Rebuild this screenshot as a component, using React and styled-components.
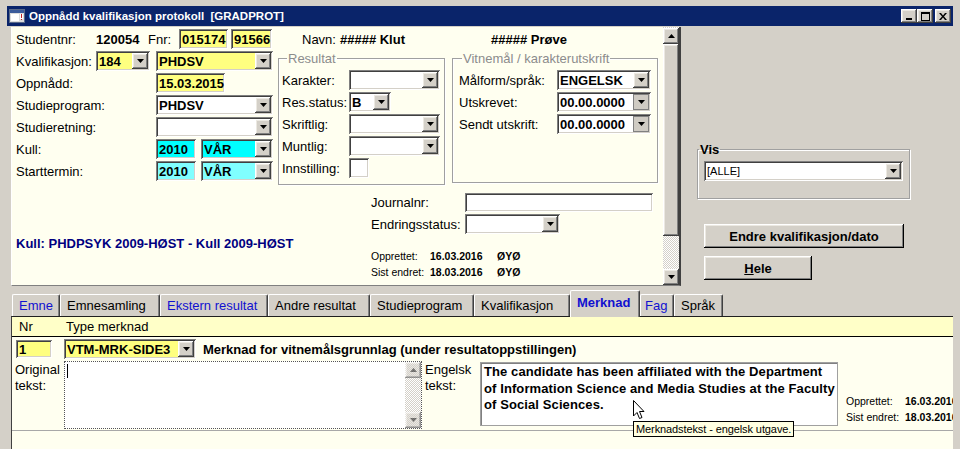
import React from "react";
import styled, { createGlobalStyle } from "styled-components";

const GRAY = "#d4d0c8";
const CREAM = "#fffff0";
const YELLOW = "#ffff80";
const CYAN = "#00ffff";
const LIGHTCYAN = "#80ffff";

const raised = `box-shadow: inset -1px -1px #404040, inset 1px 1px #ffffff, inset -2px -2px #808080, inset 2px 2px #ece9e2;`;
const sunken = `box-shadow: inset 1px 1px #808080, inset -1px -1px #ffffff, inset 2px 2px #404040, inset -2px -2px ${GRAY};`;

const GlobalStyle = createGlobalStyle`
  html, body { margin: 0; padding: 0; }
  body {
    background: ${GRAY};
    font-family: "Liberation Sans", Arial, sans-serif;
    font-size: 13px;
    color: #000;
  }
  * { box-sizing: border-box; }
`;

const Window = styled.div`
  position: relative;
  width: 960px;
  height: 449px;
  overflow: hidden;
  padding-top: 6px;
  background: ${GRAY};
`;

//Title bar
const TitleBar = styled.div`
  display: flex;
  align-items: center;
  height: 20px;
  margin: 0 7px;
  padding: 0 2px;
  background: #0a246a;
  color: #fff;
  font-family: "Liberation Sans", Arial, sans-serif;
  font-weight: bold;
  font-size: 11.5px;
`;

const TitleText = styled.span`
  margin-left: 4px;
  white-space: pre;
  flex: 1;
`;

const WinButtons = styled.div`
  display: flex;
`;

const WinBtn = styled.div`
  width: 16px;
  height: 14px;
  background: ${GRAY};
  ${raised}
  display: flex;
  align-items: center;
  justify-content: center;
  margin-left: ${(p) => (p.$gap ? 2 : 0)}px;
`;

//Main area
const Main = styled.div`
  display: flex;
  margin-top: 1px;
  padding-left: 11px;
`;

const TopPanel = styled.div`
  display: flex;
  flex-shrink: 0;
  width: 670px;
  height: 259px;
  background: ${CREAM};
  border-left: 1px solid #fff;
  border-right: 2px solid #404040;
  border-bottom: 1px solid #808080;
`;

const FormArea = styled.div`
  flex: 1;
  padding: 1px 0 0 4px;
  display: flex;
  flex-direction: column;
`;

const Row = styled.div`
  display: flex;
  align-items: ${(p) => p.$align || "center"};
  height: ${(p) => p.$h || 22}px;
  white-space: nowrap;
`;

const Label = styled.span`
  display: inline-block;
  width: ${(p) => (p.$w ? p.$w + "px" : "auto")};
  margin-left: ${(p) => p.$ml || 0}px;
  color: ${(p) => p.$color || "#000"};
  font-size: ${(p) => p.$size || 13}px;
  font-weight: ${(p) => (p.$bold ? "bold" : "normal")};
  flex-shrink: 0;
`;

const Field = styled.div`
  display: flex;
  align-items: center;
  flex-shrink: 0;
  width: ${(p) => p.$w}px;
  height: ${(p) => p.$h || 20}px;
  margin-left: ${(p) => p.$ml || 0}px;
  padding: 0 2px 0 3px;
  background: ${(p) => p.$bg || "#fff"};
  ${sunken}
  font-weight: bold;
  font-size: ${(p) => p.$size || 13}px;
  overflow: hidden;
`;

const FieldText = styled.span`
  flex: 1;
  overflow: hidden;
  font-weight: ${(p) => (p.$normal ? "normal" : "bold")};
`;

const DropBtn = styled.div`
  width: 16px;
  height: 16px;
  background: ${GRAY};
  display: flex;
  align-items: center;
  justify-content: center;
  ${(p) =>
    p.$flat
      ? `box-shadow: inset 1px 1px #808080, inset -1px -1px #808080; background: #cfcbc3;`
      : raised}
`;

const Arrow = ({ up }) => (
  <svg width="7" height="4" viewBox="0 0 7 4">
    <polygon points={up ? "0,4 7,4 3.5,0" : "0,0 7,0 3.5,4"} fill="#000" />
  </svg>
);

const Combo = ({ w, bg, ml, flat, normal, size, children }) => (
  <Field $w={w} $bg={bg} $ml={ml} $size={size}>
    <FieldText $normal={normal}>{children}</FieldText>
    <DropBtn $flat={flat}>
      <Arrow />
    </DropBtn>
  </Field>
);

const Columns = styled.div`
  display: flex;
  align-items: flex-start;
`;

const LeftCol = styled.div`
  display: flex;
  flex-direction: column;
  width: 257px;
`;

const Group = styled.fieldset`
  margin: 1px 0 0 ${(p) => p.$ml || 0}px;
  padding: 3px 0 0 ${(p) => p.$pl || 3}px;
  width: ${(p) => p.$w}px;
  height: ${(p) => p.$h}px;
  border: 1px solid #a0a0a0;
  box-shadow: 1px 1px 0 #fff, inset 1px 1px 0 #fff;
  min-width: 0;
  flex-shrink: 0;
`;

const Legend = styled.legend`
  padding: 0 1px;
  margin-left: ${(p) => p.$ml || 0}px;
  color: ${(p) => p.$color || "#8c8c8c"};
  font-weight: ${(p) => (p.$bold ? "bold" : "normal")};
  font-size: 13px;
  line-height: 15px;
`;

const Lower = styled.div`
  display: flex;
  margin-top: 6px;
`;

const KullText = styled.div`
  width: 355px;
  padding-top: 45px;
  color: #000080;
  font-weight: bold;
  white-space: nowrap;
`;

const InfoCol = styled.div`
  display: flex;
  flex-direction: column;
`;

const Small = styled.div`
  display: flex;
  flex-direction: column;
  flex-shrink: 0;
  margin-top: ${(p) => p.$mt || 0}px;
  margin-left: ${(p) => p.$ml || 0}px;
  font-size: 10.5px;
  line-height: 16px;
  white-space: nowrap;
`;

const SmallRow = styled.div`
  display: flex;
`;

const SmallLabel = styled.span`
  width: ${(p) => (p.$w ? p.$w + "px" : "auto")};
  flex-shrink: 0;
  font-weight: ${(p) => (p.$bold ? "bold" : "normal")};
`;

//Scrollbar
const ScrollBar = styled.div`
  width: 16px;
  flex-shrink: 0;
  display: flex;
  flex-direction: column;
  background-image: repeating-conic-gradient(#ffffff 0 25%, ${GRAY} 0 50%);
  background-size: 2px 2px;
  padding-top: 1px;
`;

const ScrollBtn = styled.div`
  width: 16px;
  height: 16px;
  background: ${GRAY};
  ${raised}
  display: flex;
  align-items: center;
  justify-content: center;
  opacity: ${(p) => (p.$disabled ? 0.5 : 1)};
`;

const Thumb = styled.div`
  width: 16px;
  height: ${(p) => p.$h}px;
  background: ${GRAY};
  ${raised}
`;

const Track = styled.div`
  flex: 1;
`;

//Right pane
const RightPane = styled.div`
  flex: 1;
  padding: 114px 0 0 16px;
  display: flex;
  flex-direction: column;
`;

const Button = styled.div`
  width: ${(p) => p.$w}px;
  height: 24px;
  margin: ${(p) => p.$mt}px 0 0 7px;
  background: ${GRAY};
  box-shadow: inset -1px -1px #000, inset 1px 1px #fff, inset -2px -2px #808080,
    inset 2px 2px #ece9e2;
  display: flex;
  align-items: center;
  justify-content: center;
  font-weight: bold;
  font-size: 13px;
  u {
    text-decoration: underline;
  }
`;

//Tabs
const TabRow = styled.div`
  display: flex;
  align-items: flex-end;
  height: 27px;
  margin-top: 3px;
  padding-left: 12px;
`;

const Tab = styled.div`
  width: ${(p) => p.$w}px;
  height: ${(p) => (p.$active ? 27 : 22)}px;
  margin-bottom: ${(p) => (p.$active ? -1 : 0)}px;
  padding-left: ${(p) => p.$pl || 6}px;
  display: flex;
  align-items: center;
  background: ${GRAY};
  border-top: 1px solid #fff;
  border-left: 1px solid #fff;
  border-right: 1px solid #404040;
  box-shadow: inset -1px 0 #808080;
  border-radius: 2px 2px 0 0;
  color: ${(p) => (p.$blue ? "#1010d0" : "#000")};
  font-weight: ${(p) => (p.$active ? "bold" : "normal")};
  padding-bottom: ${(p) => (p.$active ? 4 : 0)}px;
  white-space: nowrap;
  position: relative;
  z-index: ${(p) => (p.$active ? 2 : 1)};
`;

//Bottom panel
const BottomPanel = styled.div`
  position: relative;
  margin-left: 11px;
  width: 942px;
  height: 140px;
  overflow: hidden;
  background: ${CREAM};
  border-top: 1px solid #202020;
  border-left: 1px solid #404040;
`;

const HeaderRow = styled.div`
  display: flex;
  align-items: center;
  height: 20px;
  padding-left: 7px;
  background: #ffffc8;
  border-bottom: 1px solid #000;
`;

const MerkRow = styled.div`
  display: flex;
  align-items: center;
  height: 18px;
  margin-top: 3px;
  padding-left: 4px;
  white-space: nowrap;
`;

const TextRow = styled.div`
  display: flex;
  align-items: flex-start;
  margin-top: 3px;
  padding-left: 3px;
`;

const SideLabel = styled.div`
  width: ${(p) => p.$w}px;
  flex-shrink: 0;
  padding: 1px 0 0 ${(p) => p.$pl || 0}px;
  line-height: 16px;
`;

const OrigBox = styled.div`
  display: flex;
  flex-shrink: 0;
  width: 358px;
  height: 68px;
  background: #fff;
  border: 1px dotted #555;
`;

const Caret = styled.div`
  width: 1px;
  height: 14px;
  margin: 2px 0 0 2px;
  background: #000;
`;

const InnerScroll = styled(ScrollBar)`
  margin-left: auto;
  height: 66px;
  padding-top: 0;
`;

const EngBox = styled.div`
  flex-shrink: 0;
  width: 358px;
  height: 64px;
  margin-top: 1px;
  padding: 1px 0 0 3px;
  overflow: hidden;
  background: #fff;
  border: 1px solid #a0a0a0;
  box-shadow: inset 1px 1px #808080;
  font-weight: bold;
  font-size: 13px;
  line-height: 16.5px;
  letter-spacing: 0.1px;
  white-space: nowrap;
`;

const Divider = styled.div`
  height: 1px;
  margin-top: 1px;
  background: #a8a8a8;
`;

const Tooltip = styled.div`
  position: absolute;
  left: 621px;
  top: 104px;
  height: 16px;
  padding: 0 2px;
  background: #ffffe1;
  border: 1px solid #000;
  font-size: 11px;
  letter-spacing: -0.1px;
  line-height: 14px;
  white-space: nowrap;
`;

const Cursor = styled.svg`
  position: absolute;
  left: 621px;
  top: 83px;
`;

const WinIcon = () => (
  <svg width="16" height="14" viewBox="0 0 16 14">
    <rect x="0.5" y="0.5" width="15" height="13" fill="#dcdcdc" stroke="#5a6a8a" />
    <rect x="1" y="1" width="14" height="3" fill="#3a5a9a" />
    <rect x="2" y="5" width="8" height="7" fill="#ffffff" />
    <rect x="11" y="5" width="3" height="5" fill="#ffffff" />
    <rect x="12" y="5" width="1" height="4" fill="#c02020" />
    <rect x="12" y="10" width="1" height="1" fill="#c02020" />
  </svg>
);

const App = () => {
  return (
    <Window>
      <GlobalStyle />
      <TitleBar>
        <WinIcon />
        <TitleText>Oppnådd kvalifikasjon protokoll  [GRADPROT]</TitleText>
        <WinButtons>
          <WinBtn>
            <svg width="8" height="8" viewBox="0 0 8 8">
              <rect x="1" y="6" width="6" height="2" fill="#000" />
            </svg>
          </WinBtn>
          <WinBtn>
            <svg width="9" height="9" viewBox="0 0 9 9">
              <rect x="0.5" y="0.5" width="8" height="8" fill="none" stroke="#000" />
              <rect x="0" y="0" width="9" height="2" fill="#000" />
            </svg>
          </WinBtn>
          <WinBtn $gap>
            <svg width="8" height="7" viewBox="0 0 8 7">
              <path d="M0 0 L2 0 L4 2.5 L6 0 L8 0 L5 3.5 L8 7 L6 7 L4 4.5 L2 7 L0 7 L3 3.5 Z" fill="#000" />
            </svg>
          </WinBtn>
        </WinButtons>
      </TitleBar>

      <Main>
        <TopPanel>
          <FormArea>
            <Row>
              <Label $w={80}>Studentnr:</Label>
              <Label $w={52} $bold>120054</Label>
              <Label $w={31}>Fnr:</Label>
              <Field $w={49} $bg={YELLOW}>015174</Field>
              <Field $w={41} $bg={YELLOW} $ml={3}>91566</Field>
              <Label $ml={30}>Navn: </Label>
              <Label $ml={4} $bold>##### Klut</Label>
              <Label $ml={86} $bold>##### Prøve</Label>
            </Row>
            <Columns>
              <LeftCol>
                <Row>
                  <Label $w={80}>Kvalifikasjon:</Label>
                  <Combo w={54} bg={YELLOW}>184</Combo>
                  <Combo w={117} bg={YELLOW} ml={6}>PHDSV</Combo>
                </Row>
                <Row>
                  <Label $w={140}>Oppnådd:</Label>
                  <Field $w={69} $bg={YELLOW}>15.03.2015</Field>
                </Row>
                <Row>
                  <Label $w={140}>Studieprogram:</Label>
                  <Combo w={117}>PHDSV</Combo>
                </Row>
                <Row>
                  <Label $w={140}>Studieretning:</Label>
                  <Combo w={117}></Combo>
                </Row>
                <Row>
                  <Label $w={140}>Kull:</Label>
                  <Field $w={40} $bg={CYAN}>2010</Field>
                  <Combo w={72} bg={CYAN} ml={5}>VÅR</Combo>
                </Row>
                <Row>
                  <Label $w={140}>Starttermin:</Label>
                  <Field $w={40} $bg={LIGHTCYAN}>2010</Field>
                  <Combo w={72} bg={LIGHTCYAN} ml={5}>VÅR</Combo>
                </Row>
              </LeftCol>
              <Group $w={167} $h={134} $ml={5} $pl={3}>
                <Legend $ml={5}>Resultat</Legend>
                <Row>
                  <Label $w={67}>Karakter:</Label>
                  <Combo w={91}></Combo>
                </Row>
                <Row>
                  <Label $w={67}>Res.status:</Label>
                  <Combo w={42}>B</Combo>
                </Row>
                <Row>
                  <Label $w={67}>Skriftlig:</Label>
                  <Combo w={91}></Combo>
                </Row>
                <Row>
                  <Label $w={67}>Muntlig:</Label>
                  <Combo w={91}></Combo>
                </Row>
                <Row>
                  <Label $w={67}>Innstilling:</Label>
                  <Field $w={20} $h={20} />
                </Row>
              </Group>
              <Group $w={206} $h={132} $ml={7} $pl={6}>
                <Legend $ml={3}>Vitnemål / karakterutskrift</Legend>
                <Row>
                  <Label $w={98}>Målform/språk:</Label>
                  <Combo w={94}>ENGELSK</Combo>
                </Row>
                <Row>
                  <Label $w={98}>Utskrevet:</Label>
                  <Combo w={94} flat>00.00.0000</Combo>
                </Row>
                <Row>
                  <Label $w={98}>Sendt utskrift:</Label>
                  <Combo w={94} flat>00.00.0000</Combo>
                </Row>
              </Group>
            </Columns>
            <Lower>
              <KullText>Kull: PHDPSYK 2009-HØST - Kull 2009-HØST</KullText>
              <InfoCol>
                <Row>
                  <Label $w={94}>Journalnr:</Label>
                  <Field $w={188} $h={19} />
                </Row>
                <Row>
                  <Label $w={94}>Endringsstatus:</Label>
                  <Combo w={95}></Combo>
                </Row>
                <Small $mt={13}>
                  <SmallRow>
                    <SmallLabel $w={59}>Opprettet:</SmallLabel>
                    <SmallLabel $w={67} $bold>16.03.2016</SmallLabel>
                    <SmallLabel $bold>ØYØ</SmallLabel>
                  </SmallRow>
                  <SmallRow>
                    <SmallLabel $w={59}>Sist endret:</SmallLabel>
                    <SmallLabel $w={67} $bold>18.03.2016</SmallLabel>
                    <SmallLabel $bold>ØYØ</SmallLabel>
                  </SmallRow>
                </Small>
              </InfoCol>
            </Lower>
          </FormArea>
          <ScrollBar>
            <ScrollBtn>
              <Arrow up />
            </ScrollBtn>
            <Thumb $h={192} />
            <Track />
            <ScrollBtn>
              <Arrow />
            </ScrollBtn>
          </ScrollBar>
        </TopPanel>

        <RightPane>
          <Group $w={213} $h={57} $pl={6}>
            <Legend $ml={-5} $color="#000" $bold>Vis</Legend>
            <Row $h={21} $align="flex-end">
              <Combo w={199} normal size={11}>[ALLE]</Combo>
            </Row>
          </Group>
          <Button $w={200} $mt={25}>Endre kvalifikasjon/dato</Button>
          <Button $w={108} $mt={8}>
            <u>H</u>ele
          </Button>
        </RightPane>
      </Main>

      <TabRow>
        <Tab $w={48} $blue>Emne</Tab>
        <Tab $w={100}>Emnesamling</Tab>
        <Tab $w={108} $blue>Ekstern resultat</Tab>
        <Tab $w={102}>Andre resultat</Tab>
        <Tab $w={104}>Studieprogram</Tab>
        <Tab $w={96}>Kvalifikasjon</Tab>
        <Tab $w={70} $blue $active>Merknad</Tab>
        <Tab $w={34} $blue $pl={4}>Fag</Tab>
        <Tab $w={49}>Språk</Tab>
      </TabRow>

      <BottomPanel>
        <HeaderRow>
          <Label $w={47}>Nr</Label>
          <Label>Type merknad</Label>
        </HeaderRow>
        <MerkRow>
          <Field $w={36} $h={18} $bg={YELLOW}>1</Field>
          <Combo w={132} bg={YELLOW} ml={12}>VTM-MRK-SIDE3</Combo>
          <Label $ml={7} $bold>Merknad for vitnemålsgrunnlag (under resultatoppstillingen)</Label>
        </MerkRow>
        <TextRow>
          <SideLabel $w={49}>Original tekst:</SideLabel>
          <OrigBox>
            <Caret />
            <InnerScroll>
              <ScrollBtn $disabled>
                <Arrow up />
              </ScrollBtn>
              <Track />
              <ScrollBtn $disabled>
                <Arrow />
              </ScrollBtn>
            </InnerScroll>
          </OrigBox>
          <SideLabel $w={58} $pl={3}>Engelsk tekst:</SideLabel>
          <EngBox>
            The candidate has been affiliated with the Department
            <br />
            of Information Science and Media Studies at the Faculty
            <br />
            of Social Sciences.
          </EngBox>
          <Small $mt={32} $ml={8}>
            <SmallRow>
              <SmallLabel $w={59}>Opprettet:</SmallLabel>
              <SmallLabel $bold>16.03.2016</SmallLabel>
            </SmallRow>
            <SmallRow>
              <SmallLabel $w={59}>Sist endret:</SmallLabel>
              <SmallLabel $bold>18.03.2016</SmallLabel>
            </SmallRow>
          </Small>
        </TextRow>
        <Divider />
        <Cursor width="12" height="20" viewBox="0 0 12 20">
          <path d="M0.5 0.5 L0.5 16 L4 12.5 L6.5 18.5 L9 17.5 L6.5 11.5 L11 11.5 Z" fill="#fff" stroke="#000" />
        </Cursor>
        <Tooltip>Merknadstekst - engelsk utgave.</Tooltip>
      </BottomPanel>
    </Window>
  );
};

export default App;
